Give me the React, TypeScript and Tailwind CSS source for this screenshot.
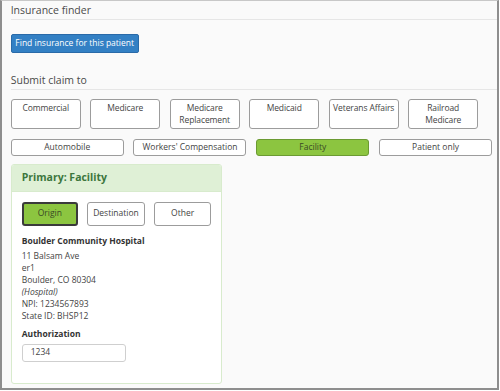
const FONT = { fontFamily: '"Open Sans", "Noto Sans", Arial, sans-serif' };

const payers = [
  "Commercial",
  "Medicare",
  "Medicare Replacement",
  "Medicaid",
  "Veterans Affairs",
  "Railroad Medicare",
];

const others = [
  { label: "Automobile", active: false },
  { label: "Workers' Compensation", active: false },
  { label: "Facility", active: true },
  { label: "Patient only", active: false },
];

const addressLines = ["11 Balsam Ave", "er1", "Boulder, CO 80304"];

function SectionTitle({ children }: { children: string }) {
  return (
    <div className="-mr-4 border-b border-[#e6e6e6] pb-[1px] text-[10.5px] leading-[15px] text-[#4a4a4a]">
      {children}
    </div>
  );
}

export default function App() {
  return (
    <div className="h-[391px] w-[500px] bg-white" style={FONT}>
      <div className="h-[390px] w-[499px] overflow-hidden border-x-2 border-b-2 border-t border-x-[#8e8e8e] border-b-[#8e8e8e] border-t-[#c8c8c8] bg-[#fafafa] pl-[8.7px]">
        <div className="pt-[2px]">
          <SectionTitle>Insurance finder</SectionTitle>
        </div>

        <button className="mt-[14px] flex h-[18.5px] w-[128px] items-center justify-center rounded-[2px] border border-[#2a6aa8] bg-[#3380c4] text-[8.5px] text-white">
          Find insurance for this patient
        </button>

        <div className="mt-[20px]">
          <SectionTitle>Submit claim to</SectionTitle>
        </div>

        <div className="mt-[9px] flex gap-[9.5px]">
          {payers.map((p) => (
            <div
              key={p}
              className="h-[30px] w-[70px] rounded-[3px] border border-[#9c9c9c] bg-white pt-[2px] text-center text-[8.5px] leading-[12px] tracking-[-0.1px] text-[#444]"
            >
              {p}
            </div>
          ))}
        </div>

        <div className="mt-[10px] flex gap-[9.8px]">
          {others.map((o) => (
            <div
              key={o.label}
              className={
                o.active
                  ? "flex h-[17.5px] w-[113px] items-center justify-center rounded-[3px] border border-[#6b9a32] bg-[#8cc540] text-[8.5px] text-[#3a4a26]"
                  : "flex h-[17.5px] w-[113px] items-center justify-center rounded-[3px] border border-[#9c9c9c] bg-white text-[8.5px] text-[#444]"
              }
            >
              {o.label}
            </div>
          ))}
        </div>

        <div className="mt-[8px] h-[220px] w-[211.5px] overflow-hidden rounded-[3px] border border-[#d8ebcd] bg-white">
          <div className="flex h-[27px] items-center border-b border-[#d8ebcd] bg-[#dff0d6] px-[10px] text-[10.5px] font-bold text-[#3c763d]">
            Primary: Facility
          </div>

          <div className="px-[10px] pt-[10px]">
            <div className="flex gap-[9.5px]">
              <div className="flex h-[23.5px] w-[57px] items-center justify-center rounded-[3px] border-2 border-[#3a3a3a] bg-[#8cc540] text-[8.5px] text-[#3a4a26]">
                Origin
              </div>
              <div className="flex h-[23.5px] w-[58px] items-center justify-center rounded-[3px] border border-[#9c9c9c] bg-white text-[8.5px] text-[#444]">
                Destination
              </div>
              <div className="flex h-[23.5px] w-[58px] items-center justify-center rounded-[3px] border border-[#9c9c9c] bg-white text-[8.5px] text-[#444]">
                Other
              </div>
            </div>

            <div className="mt-[9px] text-[8.5px] font-bold leading-[12px] text-[#333]">
              Boulder Community Hospital
            </div>
            <div className="mt-[3px] text-[8.5px] leading-[12px] text-[#444]">
              {addressLines.map((l) => (
                <div key={l}>{l}</div>
              ))}
              <div className="italic">(Hospital)</div>
              <div>NPI: 1234567893</div>
              <div>State ID: BHSP12</div>
            </div>

            <div className="mt-[6px] text-[8.5px] font-bold leading-[12px] text-[#333]">
              Authorization
            </div>
            <div className="mt-[4px] flex h-[18px] w-[104px] items-center rounded-[3px] border border-[#cfcfcf] bg-white pl-[8px] text-[8.5px] text-[#444]">
              1234
            </div>
          </div>
        </div>
      </div>
    </div>
  );
}
